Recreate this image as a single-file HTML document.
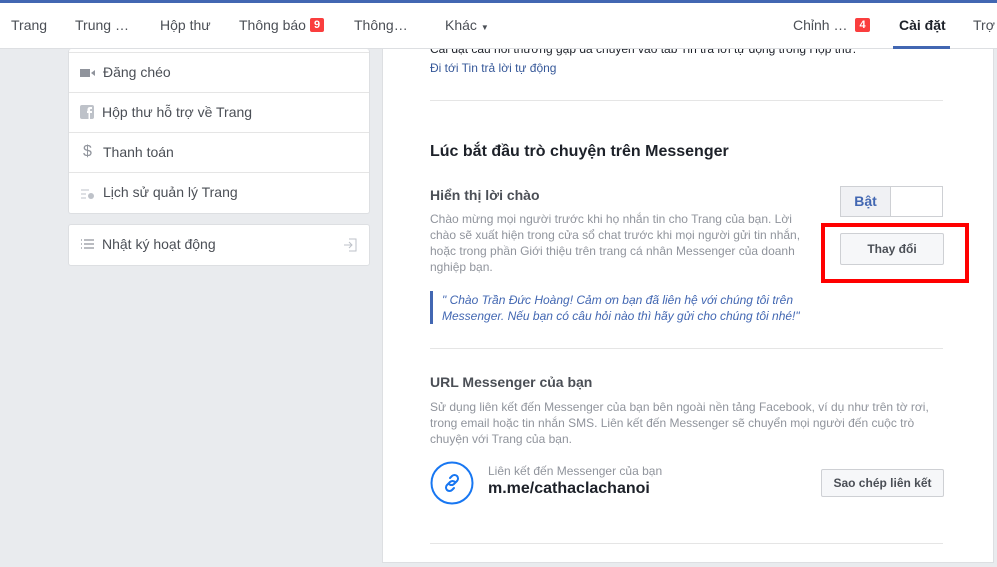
<!DOCTYPE html>
<html><head><meta charset="utf-8"><style>
*{margin:0;padding:0;box-sizing:border-box}
body{width:997px;height:567px;overflow:hidden;background:#e9ebee;font-family:"Liberation Sans",Arial,sans-serif;position:relative;color:#1d2129}
.a{position:absolute}
.top{left:0;top:0;width:997px;height:3px;background:#4267b2;z-index:11}
.nav{left:0;top:3px;width:997px;height:46px;background:#fff;border-bottom:1px solid #dddfe2;z-index:10}
.nav>span{position:absolute;top:14px;font-size:14px;color:#4b4f56;white-space:nowrap}
.badge{display:inline-block;background:#fa3e3e;color:#fff;font-size:11px;font-weight:bold;padding:1px 4px;border-radius:2px;vertical-align:2px;margin-left:4px}
.card{background:#fff;border:1px solid #dddfe2;border-radius:3px}
.row{position:absolute;left:0;width:300px;height:40px;border-top:1px solid #e5e5e5;font-size:14px;color:#4b4f56}
.row .t{position:absolute;left:34px;top:11px}
.row .i{position:absolute;left:11px;top:12px;width:16px;height:16px}
.main{left:382px;top:49px;width:612px;height:514px;background:#fff;border-left:1px solid #dddfe2;border-right:1px solid #dddfe2;border-bottom:1px solid #dddfe2}
.hr{left:430px;width:513px;height:1px;background:#e5e5e5}
.g{color:#90949c;font-size:12px;line-height:16px}
.btn{background:#f6f7f9;border:1px solid #ced0d4;border-radius:2px;font-size:12px;font-weight:bold;color:#4b4f56;text-align:center}
</style></head><body>
<div class="a top"></div>
<div class="a nav">
<span style="left:11px">Trang</span>
<span style="left:75px">Trung …</span>
<span style="left:160px">Hộp thư</span>
<span style="left:239px">Thông báo<span class="badge">9</span></span>
<span style="left:354px">Thông…</span>
<span style="left:445px">Khác <small style="font-size:8px">▼</small></span>
<span style="left:793px">Chỉnh …<span class="badge" style="margin-left:8px">4</span></span>
<span style="left:899px;color:#1d2129;font-weight:bold">Cài đặt</span>
<span style="left:973px">Trợ</span>
<div class="a" style="left:893px;top:43px;width:57px;height:3px;background:#4267b2"></div>
</div>
<div class="a card" style="left:68px;top:49px;width:302px;height:165px;border-top:none">
<div class="row" style="top:3px;border-top:1px solid #e5e5e5"><svg class="i" viewBox="0 0 16 16"><rect x="0" y="4" width="10" height="8" fill="#90949c"/><path d="M11 8l4-3v6z" fill="#90949c"/></svg><span class="t">Đăng chéo</span></div>
<div class="row" style="top:43px"><svg class="i" viewBox="0 0 16 16"><rect width="14" height="14" rx="2" fill="#bec2c9"/><path d="M10 14V8h2V6h-2V5c0-1 .5-1 1-1h1V2h-2c-2 0-2.5 1.5-2.5 3v1H7v2h1.5v6z" fill="#fff"/></svg><span class="t" style="left:33px">Hộp thư hỗ trợ về Trang</span></div>
<div class="row" style="top:83px"><span class="i" style="color:#90949c;font-size:16px;top:10px;left:14px">$</span><span class="t">Thanh toán</span></div>
<div class="row" style="top:123px"><svg class="i" viewBox="0 0 16 16"><path d="M1 5h8M1 9h5M1 13h5" stroke="#bec2c9"/><circle cx="11" cy="11" r="3" fill="#bec2c9"/></svg><span class="t">Lịch sử quản lý Trang</span></div>
</div>
<div class="a card" style="left:68px;top:224px;width:302px;height:42px">
<div class="row" style="top:0;border:none"><svg class="i" viewBox="0 0 16 16"><path d="M1 3h1M4 3h10M1 7h1M4 7h10M1 11h1M4 11h10" stroke="#90949c" stroke-width="1.3"/></svg><span class="t" style="left:33px">Nhật ký hoạt động</span><svg class="i" style="left:274px" viewBox="0 0 16 16"><path d="M6 2h7v12H6M1 8h8M6 5l3 3-3 3" fill="none" stroke="#bec2c9"/></svg></div>
</div>
<div class="a main"></div>
<div class="a" style="left:430px;top:42px;font-size:12px;color:#1d2129;white-space:nowrap">Cài đặt câu hỏi thường gặp đã chuyển vào tab Tin trả lời tự động trong Hộp thư.</div>
<div class="a" style="left:430px;top:61px;font-size:12px;color:#365899">Đi tới Tin trả lời tự động</div>
<div class="a hr" style="top:100px"></div>
<div class="a" style="left:430px;top:143px;font-size:16px;font-weight:bold">Lúc bắt đầu trò chuyện trên Messenger</div>
<div class="a" style="left:430px;top:187px;font-size:14px;font-weight:bold;color:#4b4f56">Hiển thị lời chào</div>
<div class="a g" style="left:430px;top:211px;width:380px">Chào mừng mọi người trước khi họ nhắn tin cho Trang của bạn. Lời chào sẽ xuất hiện trong cửa sổ chat trước khi mọi người gửi tin nhắn, hoặc trong phần Giới thiệu trên trang cá nhân Messenger của doanh nghiệp bạn.</div>
<div class="a" style="left:430px;top:291px;width:3px;height:33px;background:#4267b2"></div>
<div class="a" style="left:442px;top:292px;font-size:12px;line-height:16px;font-style:italic;color:#4267b2;width:380px">" Chào Trần Đức Hoàng! Cảm ơn bạn đã liên hệ với chúng tôi trên Messenger. Nếu bạn có câu hỏi nào thì hãy gửi cho chúng tôi nhé!"</div>
<div class="a" style="left:840px;top:186px;width:103px;height:31px;border:1px solid #ced0d4;background:#fff"><div style="width:50px;height:29px;background:#f0f1f4;border-right:1px solid #ced0d4;color:#4267b2;font-size:14px;font-weight:bold;text-align:center;line-height:29px">Bật</div></div>
<div class="a btn" style="left:840px;top:233px;width:104px;height:32px;line-height:30px">Thay đổi</div>
<div class="a" style="left:821px;top:223px;width:148px;height:60px;border:4px solid #f00"></div>
<div class="a hr" style="top:348px"></div>
<div class="a" style="left:430px;top:374px;font-size:14px;font-weight:bold;color:#4b4f56">URL Messenger của bạn</div>
<div class="a g" style="left:430px;top:399px;width:500px">Sử dụng liên kết đến Messenger của bạn bên ngoài nền tảng Facebook, ví dụ như trên tờ rơi, trong email hoặc tin nhắn SMS. Liên kết đến Messenger sẽ chuyển mọi người đến cuộc trò chuyện với Trang của bạn.</div>
<svg class="a" style="left:430px;top:461px" width="44" height="44" viewBox="0 0 44 44"><circle cx="22" cy="22" r="20.5" fill="none" stroke="#1877f2" stroke-width="2"/><g fill="none" stroke="#1877f2" stroke-width="2" stroke-linecap="round"><path d="M20 17l2-2a3.5 3.5 0 015 5l-3 3a3.5 3.5 0 01-5 0"/><path d="M24 27l-2 2a3.5 3.5 0 01-5-5l3-3a3.5 3.5 0 015 0"/></g></svg>
<div class="a" style="left:488px;top:464px;font-size:12px;color:#90949c">Liên kết đến Messenger của bạn</div>
<div class="a" style="left:488px;top:480px;font-size:16px;font-weight:bold">m.me/cathaclachanoi</div>
<div class="a btn" style="left:821px;top:469px;width:123px;height:28px;line-height:26px">Sao chép liên kết</div>
<div class="a hr" style="top:543px"></div>
</body></html>
